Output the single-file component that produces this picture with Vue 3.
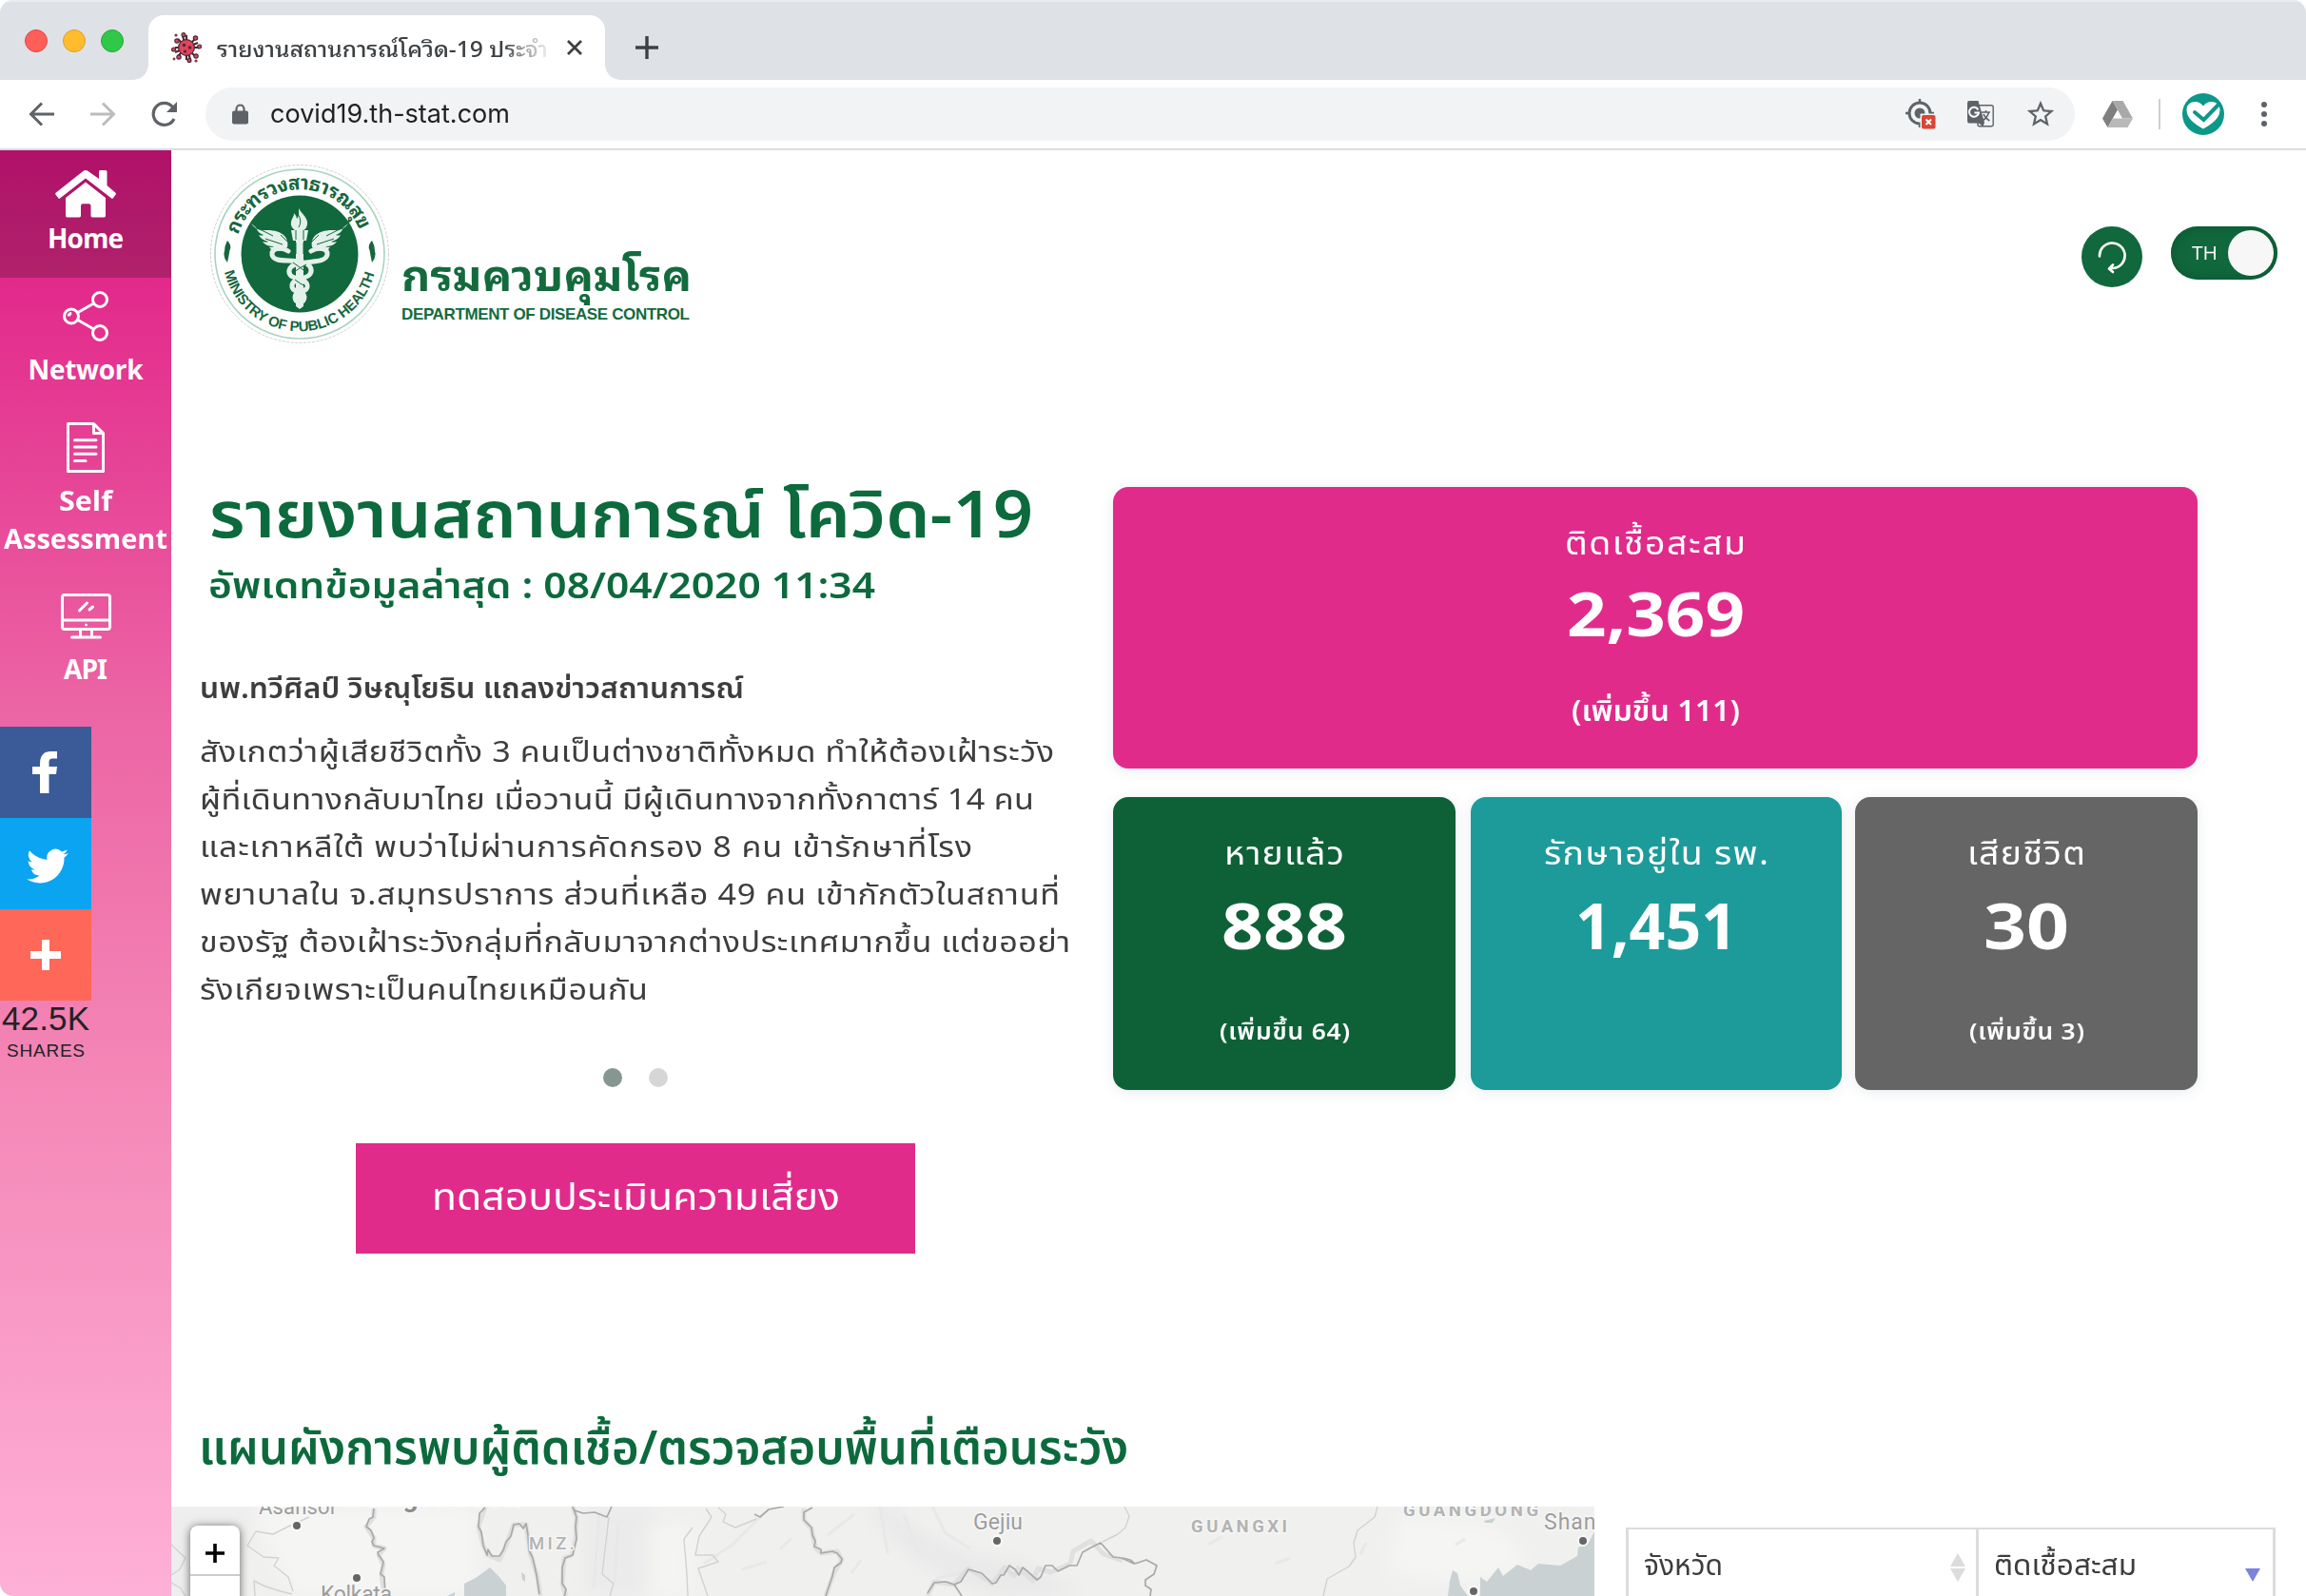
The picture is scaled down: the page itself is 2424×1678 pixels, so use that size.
<script setup>
// Makes a run of text take up the given width in pixels: the glyphs widen
// up to a limit (the directive's argument, in percent), letter spacing does the rest.
const vFit = {
  mounted(el, { value, arg }) {
    const limit = Number(arg || 110) / 100
    el.style.letterSpacing = '0px'
    const base = el.getBoundingClientRect().width
    el.style.letterSpacing = '1px'
    const count = Math.max(2, Math.round(el.getBoundingClientRect().width - base))
    const scale = Math.min(limit, Math.max(1, value / base))
    const gap = (value / scale - base) / (count - 1)
    el.style.letterSpacing = gap + 'px'
    el.style.transform = `scaleX(${scale})`
    el.style.marginRight = value - (base + gap * count) + 'px'
  },
}

const newsLines = [
  { text: 'สังเกตว่าผู้เสียชีวิตทั้ง 3 คนเป็นต่างชาติทั้งหมด ทำให้ต้องเฝ้าระวัง', w: 898 },
  { text: 'ผู้ที่เดินทางกลับมาไทย เมื่อวานนี้ มีผู้เดินทางจากทั้งกาตาร์ 14 คน', w: 877 },
  { text: 'และเกาหลีใต้ พบว่าไม่ผ่านการคัดกรอง 8 คน เข้ารักษาที่โรง', w: 812 },
  { text: 'พยาบาลใน จ.สมุทรปราการ ส่วนที่เหลือ 49 คน เข้ากักตัวในสถานที่', w: 904 },
  { text: 'ของรัฐ ต้องเฝ้าระวังกลุ่มที่กลับมาจากต่างประเทศมากขึ้น แต่ขออย่า', w: 915 },
  { text: 'รังเกียจเพราะเป็นคนไทยเหมือนกัน', w: 471 },
]

const cards = [
  { cls: 'recovered', label: 'หายแล้ว', lw: 126, value: '888', vw: 132, inc: '(เพิ่มขึ้น 64)', iw: 137 },
  { cls: 'hospital', label: 'รักษาอยู่ใน รพ.', lw: 236, value: '1,451', vw: 170, inc: '', iw: 0 },
  { cls: 'deaths', label: 'เสียชีวิต', lw: 124, value: '30', vw: 90, inc: '(เพิ่มขึ้น 3)', iw: 121 },
]
</script>

<template>
  <div class="window">
    <div class="tabbar">
      <div class="lights"><i class="red"></i><i class="yellow"></i><i class="green"></i></div>
      <div class="tab">
        <svg class="favicon" viewBox="-16 -16 32 32" width="32" height="32">
          <g stroke="#4a2a35" stroke-width="2.2">
            <path d="M0-13V13M-12 0H13M-9-9L9 9M9-9L-9 9M-4-12L4 12M-12 5L12-5" />
          </g>
          <g fill="#e2445c" stroke="#4a2a35" stroke-width="1.2">
            <circle cx="-3" cy="-13.4" r="2" /><circle cx="9.5" cy="-10" r="2.2" /><circle cx="13.6" cy="-1" r="2" />
            <circle cx="10" cy="9" r="2.2" /><circle cx="3" cy="13.6" r="2" /><circle cx="-8" cy="10" r="2.2" />
            <circle cx="-13.4" cy="2" r="2" /><circle cx="-10" cy="-7" r="2.2" />
            <circle r="8.4" />
          </g>
          <g fill="#4a2a35"><circle cx="-2.5" cy="-2.5" r="1.8" /><circle cx="3.5" cy="0" r="1.8" /><circle cx="-1.5" cy="4" r="1.6" /></g>
          <g fill="#8a3040"><circle cx="-11" cy="-13" r="1.6" /><circle cx="-13" cy="12" r="1.4" /><circle cx="10" cy="14" r="1.6" /></g>
        </svg>
        <span class="tab-title"><span v-fit="348">รายงานสถานการณ์โควิด-19 ประจำ</span></span>
        <svg class="tab-close" viewBox="0 0 18 18" width="18" height="18"><path d="M2 2l14 14M16 2L2 16" stroke="#3c4043" stroke-width="2.8" /></svg>
      </div>
      <svg class="new-tab" viewBox="0 0 24 24" width="24" height="24"><path d="M12 0v24M0 12h24" stroke="#3c4043" stroke-width="3.4" /></svg>
    </div>

    <div class="toolbar">
      <svg class="nav" viewBox="0 0 28 28" width="28" height="28"><path d="M27 14H3M14 2.500L2.500 14 14 25.500" fill="none" stroke="#5f6368" stroke-width="3" /></svg>
      <svg class="nav fwd" viewBox="0 0 28 28" width="28" height="28"><path d="M1 14h24M14 2.500L25.500 14 14 25.500" fill="none" stroke="#babcbe" stroke-width="3" /></svg>
      <svg class="nav reload" viewBox="0 0 28 28" width="28" height="28"><path d="M24 19A11.500 11.500 0 1 1 22.500 6.500" fill="none" stroke="#5f6368" stroke-width="3.200" /><path d="M27 1v11H16z" fill="#5f6368" /></svg>
      <div class="omnibox">
        <svg class="lock" viewBox="0 0 17 22" width="17" height="22"><rect y="7.500" width="17" height="14" rx="2" fill="#5f6368" /><path d="M4.500 9V5.500a4 4 0 0 1 8 0V9" fill="none" stroke="#5f6368" stroke-width="2.200" /></svg>
        <span class="url"><span v-fit="252">covid19.th-stat.com</span></span>
        <svg class="i-locate" viewBox="0 0 32 32" width="32" height="32">
          <circle cx="15" cy="15" r="11" fill="none" stroke="#5f6368" stroke-width="3" /><circle cx="15" cy="15" r="5.500" fill="#5f6368" />
          <path d="M15 0v4M0 15h4M26 15h4M15 26v4" stroke="#5f6368" stroke-width="2.400" />
          <rect x="15.500" y="15.500" width="17" height="17" fill="#f1f3f4" /><rect x="17" y="17" width="14.500" height="14.500" rx="2" fill="#db4437" />
          <path d="M21.500 21.500l5.500 5.500M27 21.500L21.500 27" stroke="#fff" stroke-width="2" />
        </svg>
        <svg class="i-translate" viewBox="0 0 28 28" width="28" height="28">
          <rect x="11" y="4.800" width="16.200" height="22" rx="2" fill="#f1f3f4" stroke="#5f6368" stroke-width="1.400" />
          <path d="M2 0h9.500l6.500 23 -1.500 4L12 23.500H2a2 2 0 0 1-2-2V2a2 2 0 0 1 2-2z" fill="#5f6368" />
          <path d="M11.500 9.500A5 5 0 1 0 12 12.500H7.500" fill="none" stroke="#fff" stroke-width="2" />
          <path d="M15 12h9M19.500 10v2M22.500 12c-.8 4-3.600 7-6.500 9M17 14c1.200 3 3.800 5.500 6.300 7" fill="none" stroke="#5f6368" stroke-width="1.500" />
        </svg>
        <svg class="i-star" viewBox="0 0 24 24" width="34" height="34"><path fill="#5f6368" d="M22 9.240l-7.190-.62L12 2 9.190 8.630 2 9.240l5.460 4.730L5.820 21 12 17.270 18.180 21l-1.630-7.030L22 9.240zM12 15.400l-3.760 2.270 1-4.280-3.320-2.880 4.380-.38L12 6.100l1.710 4.040 4.380.38-3.320 2.880 1 4.280L12 15.400z" /></svg>
      </div>
      <svg class="i-drive" viewBox="0 0 32 28" width="32" height="28"><path d="M10.500 0L16 9.500 5.500 28 0 18.500z" fill="#7f7f7f" /><path d="M10.500 0h11L32 18.500H21z" fill="#a9a9a9" /><path d="M11 18.500h21L26.500 28h-21z" fill="#b9b9b9" /></svg>
      <i class="sep"></i>
      <svg class="avatar" viewBox="-22 -22 44 44" width="44" height="44">
        <circle r="22" fill="#0d9788" />
        <path d="M0 15.500C-9 10-17.500 5-17.500-4.500c0-9 12-11.500 17.500-4 5.500-7.500 17.500-5 17.500 4C17.500 5 9 10 0 15.500z" fill="#fff" />
        <path d="M-9-2l9.500 8L16-10" fill="none" stroke="#0d9788" stroke-width="4" stroke-linecap="round" />
      </svg>
      <svg class="menu" viewBox="0 0 6 26" width="6" height="26" fill="#5f6368"><circle cx="3" cy="3" r="3" /><circle cx="3" cy="13" r="3" /><circle cx="3" cy="23" r="3" /></svg>
    </div>

    <div class="page">
      <aside class="sidebar">
        <div class="item active">
          <svg viewBox="0 0 64 44" width="64" height="50" preserveAspectRatio="none" fill="#fff"><path d="M46 8V1.500Q46 0 47.500 0h5.500Q54.500 0 54.500 1.500V14l9 7q.8.700.2 1.500l-3 3.400q-.7.700-1.500.1L32 7.500 5 26q-.8.600-1.500-.1L.4 22.500q-.6-.8.2-1.500L29 1.200q3-2.200 6 0z" /><path d="M32 11l21 14.500V42q0 1.500-1.500 1.500H39q-1.500 0-1.500-1.500V33q0-2-2-2h-6.500q-2 0-2 2v9q0 1.500-1.500 1.500H12.500Q11 43.500 11 42V25.500z" /></svg>
          <b><span v-fit="80">Home</span></b>
        </div>
        <div class="item network">
          <svg viewBox="0 0 48 53" width="48" height="53" fill="none" stroke="#fff" stroke-width="3"><circle cx="39" cy="9" r="7.500" /><circle cx="39" cy="44" r="7.500" /><circle cx="9" cy="26.500" r="7.500" /><path d="M15.500 22.800L32.500 13M15.500 30.200L32.500 40M6 26.500q.5-2.800 3.200-3" /></svg>
          <b><span v-fit="121">Network</span></b>
        </div>
        <div class="item assess">
          <svg viewBox="0 0 40 53" width="40" height="53" fill="none" stroke="#fff" stroke-width="3" stroke-linejoin="round"><path d="M1.500 1.500h27l10 10v40h-37zM28.500 1.500v10h10" /><path d="M8.500 18.700h22.500M8.500 26h22.500M8.500 33.200h22.500M8.500 40.400h11.500" stroke-linecap="round" /></svg>
          <b><span v-fit="56">Self</span><br><span v-fit="172">Assessment</span></b>
        </div>
        <div class="item api">
          <svg viewBox="0 0 53 48" width="53" height="48" fill="none" stroke="#fff" stroke-width="3"><rect x="1.500" y="1.500" width="50" height="36" rx="2.500" /><path d="M2 28h49M20.500 38v7M32.500 38v7" /><path d="M11.500 46h30M19.500 18l8-8M30 17l3.500-3" stroke-linecap="round" /><circle cx="26.500" cy="33" r="1" fill="#fff" stroke-width="1" /></svg>
          <b><span v-fit="46">API</span></b>
        </div>
        <div class="share">
          <a class="fb"><svg viewBox="0 0 28 44" width="28" height="44"><path fill="#fff" d="M8 44V24H0v-8h8v-3C8 3.500 13 0 19 0h7v7.500h-4c-3.500 0-4.500 1-4.500 4.500v4H26l-1 8h-7.500v20z" /></svg></a>
          <a class="tw"><svg viewBox="0 0 24 20" width="44" height="37"><path fill="#fff" d="M23.950 2.570a10 10 0 0 1-2.820.78 4.960 4.960 0 0 0 2.160-2.720c-.95.550-2 .95-3.130 1.180A4.920 4.920 0 0 0 11.780 6.300C7.690 6.110 4.070 4.130 1.640 1.160A4.920 4.920 0 0 0 3.160 7.720a4.900 4.900 0 0 1-2.230-.61v.06c0 2.380 1.700 4.370 3.950 4.830a5 5 0 0 1-2.210.08 4.940 4.940 0 0 0 4.600 3.420A9.870 9.870 0 0 1 0 17.540 13.940 13.940 0 0 0 7.550 19.750c9.050 0 14-7.500 14-13.980 0-.21 0-.42-.02-.63a9.940 9.940 0 0 0 2.420-2.570z" /></svg></a>
          <a class="more"><svg viewBox="0 0 32 32" width="32" height="32"><path d="M16 0v32M0 16h32" stroke="#fff" stroke-width="8" /></svg></a>
          <div class="count"><span v-fit:100="92">42.5K</span></div>
          <div class="shares"><span v-fit:100="82">SHARES</span></div>
        </div>
      </aside>

      <main>
        <header>
          <svg class="emblem" viewBox="-95 -95 190 190" width="190" height="190">
            <circle r="93.500" fill="#fff" stroke="#cfcfcf" stroke-width="1" stroke-dasharray="3 1.500" />
            <circle r="89" fill="none" stroke="#a9d3bf" stroke-width="1.600" />
            <circle r="61.500" fill="#11683c" />
            <path id="arc-top" d="M-65-19A67.700 67.700 0 0 1 65-19" fill="none" />
            <path id="arc-bottom" d="M-79.500 17A81.300 81.300 0 0 0 79.500 17" fill="none" />
            <g fill="#17663d" font-weight="700">
              <text class="ring-th" font-size="20.500"><textPath href="#arc-top" startOffset="1" textLength="167">กระทรวงสาธารณสุข</textPath></text>
              <text class="ring-en" font-size="15"><textPath href="#arc-bottom" startOffset="2" textLength="215" lengthAdjust="spacing">MINISTRY OF PUBLIC HEALTH</textPath></text>
              <path d="M-76-14q5 5 2.500 10q-1 6-2.500 13q-5-6-3-12q0-6 3-11zM76-14q-5 5-2.500 10q1 6 2.500 13q5-6 3-12q0-6-3-11z" />
            </g>
            <g fill="#e3f1ea">
              <path d="M-1-48C3-41 9-38 8-31q-1 5-4 6H-5q-5-3-4-9c1-4 3-5 3-9q3 3 3 6c3-3 2-7 2-11z" />
              <path d="M-9-25H9L7-14H4V55L0 58-4 55V-14H-7z" />
              <path id="wing" d="M-51-32C-45-24-40-25-34-25c8 0 14 2 18 6 3 3 4 8 3 12l-6 3c-6 2-11 0-13-3q4 0 5-1-9 0-12-5 4 1 6 0-8-2-10-7 3 1 5 0-7-3-8-8z" />
              <use href="#wing" transform="scale(-1 1)" />
            </g>
            <g fill="none" stroke="#e3f1ea" stroke-width="5" stroke-linecap="round">
              <path d="M-12-3C-20-8-30-6-29 1c2 8 16 5 28 7 12 1 15 8 12 13C8 27-9 25-8 34c0 7 13 5 13 11q0 5-5 6" />
              <path d="M12-3C20-8 30-6 29 1c-2 8-16 6-28 9-11 1-14 7-11 12 3 5 18 3 18 12 0 7-13 5-13 11q0 5 4 5" />
            </g>
            <g fill="none" stroke="#11683c" stroke-width="1"><path d="M-4-12V0M4-12V0M-44-27l16 8M44-27l-16 8M-36-16l18 6M36-16l-18 6M-20-20l7 7M20-20l-7 7M-2-42q5 7 1 14M-4-25V-15M4-25V-15M-7 9q7 5 14 10M7 11q-6 3-13 8M-5 27q5 4 11 7" /></g>
          </svg>
          <div class="dept">
            <div class="dept-th"><span v-fit="305">กรมควบคุมโรค</span></div>
            <div class="dept-en"><span v-fit="303">DEPARTMENT OF DISEASE CONTROL</span></div>
          </div>
          <div class="refresh"><svg viewBox="-16 -18 32 36" width="32" height="36" fill="none" stroke="#fff" stroke-width="2.600" stroke-linecap="round" stroke-linejoin="round"><path d="M-13-.5A13.300 13.300 0 1 1 1.500 12H-2.500M1 8.500L-3 12.500 1 16" /></svg></div>
          <div class="toggle"><span v-fit="27">TH</span><i></i></div>
        </header>

        <section class="hero">
          <div class="report">
            <h1><span v-fit:115="866">รายงานสถานการณ์ โควิด-19</span></h1>
            <h2><span v-fit:115="701">อัพเดทข้อมูลล่าสุด : 08/04/2020 11:34</span></h2>
            <h3><span v-fit="572">นพ.ทวีศิลป์ วิษณุโยธิน แถลงข่าวสถานการณ์</span></h3>
            <p><template v-for="l in newsLines" :key="l.text"><span v-fit="l.w">{{ l.text }}</span><br></template></p>
            <div class="dots"><i class="on"></i><i></i></div>
            <a class="cta"><span v-fit="429">ทดสอบประเมินความเสี่ยง</span></a>
          </div>
          <div class="stats">
            <div class="card total">
              <div class="label"><span v-fit="190">ติดเชื้อสะสม</span></div>
              <div class="num"><span v-fit:122="187">2,369</span></div>
              <div class="inc"><span v-fit="177">(เพิ่มขึ้น 111)</span></div>
            </div>
            <div class="row">
              <div v-for="c in cards" :key="c.cls" class="card" :class="c.cls">
                <div class="label"><span v-fit="c.lw">{{ c.label }}</span></div>
                <div class="num"><span v-fit:122="c.vw">{{ c.value }}</span></div>
                <div v-if="c.inc" class="inc"><span v-fit="c.iw">{{ c.inc }}</span></div>
              </div>
            </div>
          </div>
        </section>

        <h2 class="map-title"><span v-fit="977">แผนผังการพบผู้ติดเชื้อ/ตรวจสอบพื้นที่เตือนระวัง</span></h2>

        <section class="bottom">
          <div class="map">
            <svg viewBox="0 0 1496 94" width="1496" height="94">
              <defs><filter id="relief" x="-10%" y="-40%" width="120%" height="180%"><feGaussianBlur stdDeviation="9" /></filter></defs>
              <rect width="1496" height="94" fill="#f0f0ef" />
              <g filter="url(#relief)">
                <path d="M80 0H320V94H130z" fill="#f5f5f4" /><path d="M0 0H90L60 94H0z" fill="#ecedec" />
                <path d="M435 0h75v94h-75z" fill="#ebebeb" /><path d="M500 20h50v74h-50z" fill="#f4f4f3" />
                <path d="M760 0q40 50 140 60l60 34h-90q-90-20-140-94z" fill="#e9e9e9" /><path d="M1290 10l100 10 40 40-60 20-90-10z" fill="#f5f5f3" />
              </g>
              <g fill="none" stroke="#e8e8e8" stroke-width="3"><path d="M560 60l30-20 30-30M690 30l28-22M640 45l12-12M600 66l26-8M745 0l8 50M770 8l16 42M800 0l14 28 26 16M830 70l-26 5M715 70l10-14M450 6l-6 80M470 20l-4 60M1090 40l14-8M1160 60l16-6M1350 40l10-6M1250 50l6-12" /></g>
              <g fill="#c9d1d3">
                <path d="M308 94V81l12-6 15-11 9 9 8 10v11zM368 69l4 3v7l-3-2zM290 94l8-4v4z" />
                <path d="M1342 94l2-16 3-11 5 3 3 13 8 11zM1376 94V74l7 5 12-15 5 9 15-12 14 6 8-7 23 2 18-10 1-9 11-5 6-12V94zM1380 15l12-3-3 5h-8z" />
              </g>
              <g fill="none" stroke="#d2d2d2" stroke-width="1.400" stroke-linejoin="round">
                <path d="M145 11l-22 10-16 8-18-3-9 15 17 12 16 1-5 8 15 12 5 15M88 94l-1-16 12 6 16 5 12 3M0 40l15 14-6 12-9 6M0 80l10 6 5 8M460 11l-7 60 12 10-4 13" />
                <path d="M562 2l6 9-13 20-4 20h18l6 7-21 7 10 29M548 22l-9 12 3 37 1 23M575 1l8 7-3 8 13 6 22-9M1002 0l5 10-4 12-8 7-16 8M1268 0l-3 11-18 14-4 13 2 15-7 10-23 13-4 18" />
              </g>
              <g fill="none" stroke="#e0e0e0" stroke-width="5" stroke-linejoin="round"><path d="M213 2v9l-8 10 8 12v8l11 3-6 7 5 10-2 10 3 23M330 1l-7 20 5 20 5 10 12 5 7-15 8-22 13 0 4 29 8 26 3 20M422 0l4 11-1 23-4 17-8 3-2 27 4 13M665 2v12l8 9 4 20 6 6 17-2 5 9-8 13-9 25M795 94l7-15 21 3 15-17 25 16 13-17 10 9 4-8 16 13 5-13 14 4 20-9 3-13 19-11 13 14 20 7" /></g>
              <g fill="none" stroke="#a9a9a9" stroke-width="1.700" stroke-linejoin="round">
                <path d="M213 2l-1 9-4 2-3 8 5 4 3 8-2 4 2 4 11 3-7 4 1 3 5 7-1 5-2 8 4 3 1 20" />
                <path d="M330 1l-6 6-1 14 3 6 2 14 4 10 1-6 4 7 8 0 4-6 3-9 5-6 3-12 6-1 4 5 3-5 2 12 1 16 4 8 4 18 3 20M422 0l4 11-1 10 1 13-4 17-8 3-3 10 0 17 4 6-2 8M424 4l9 3 12-1 13 5 5-11" />
                <path d="M674 1l-9 5v8l8 8 1 8 3 6-1 6 7 3v4l12-2 5 2 5 6-1 4-7 5-2 9-7 21M613 8l6 3 9-8 16-3M795 91l7-11 12-1 9 3 7-3 8-13 14 4 11 11 4-1 5-8 3 0 6-10 6 4 4 6 4-8 5 4 10 9 4-3 5-12 7 0 6 6 12-6 8 0 6-14 9-5 10-5 13 15 9 1 13 6M823 82l8 12" />
                <path d="M1000 54l8 2 5 4 12-4 11 6-3 9-9 6 0 6 6 4-1 7" />
              </g>
              <g class="city" fill="#9d9d9d">
                <text x="92" y="8" font-size="22" textLength="80">Asansol</text><text x="183" y="0" font-size="28" font-weight="700" fill="#8e8e8e" textLength="184">Bangladesh</text>
                <text x="157" y="100" font-size="23" textLength="75">Kolkata</text><text x="843" y="24" font-size="23" textLength="52">Gejiu</text><text x="1443" y="24" font-size="23" letter-spacing="1">Shantou</text>
              </g>
              <g class="city" fill="#b3b3b3" font-weight="700" font-size="18.500">
                <text x="376" y="45" font-weight="500" textLength="48">MIZ.</text><text x="1072" y="27" textLength="101">GUANGXI</text><text x="1295" y="10" textLength="142">GUANGDONG</text>
              </g>
              <g fill="#666" stroke="#fafafa" stroke-width="2"><circle cx="132" cy="20" r="5" /><circle cx="195" cy="75" r="5" /><circle cx="868" cy="36" r="5" /><circle cx="1369" cy="89" r="5" /><circle cx="1484" cy="36" r="5" /></g>
            </svg>
            <div class="zoom"><span>
              <svg viewBox="0 0 20 20" width="20" height="20"><path d="M10 0v20M0 10h20" stroke="#000" stroke-width="3.600" /></svg>
            </span></div>
          </div>
          <div class="table">
            <div class="th province"><span v-fit="83">จังหวัด</span>
              <svg viewBox="0 0 16 30" width="16" height="30" fill="#dcdcdc"><path d="M8 0l8 14H0zM8 30l8-14H0z" /></svg>
            </div>
            <div class="th infected"><span v-fit="150">ติดเชื้อสะสม</span>
              <svg viewBox="0 0 16 30" width="16" height="30" fill="#7a84dd"><path d="M8 30l8-14H0z" /></svg>
            </div>
          </div>
        </section>
      </main>
    </div>
  </div>
</template>

<style>
body { background: #fff; }
</style>

<style scoped>
.window { width: 2424px; height: 1678px; overflow: hidden; background: #fff; border-radius: 14px; font-family: 'Noto Sans Thai', 'Noto Sans', 'Open Sans', sans-serif; color: #3d3d3d; }
.window *, .window { box-sizing: border-box; }
svg { display: block; flex: none; }
span { display: inline-block; white-space: nowrap; transform-origin: 0 50%; }
h1, h2, h3, p { margin: 0; }

.tabbar { height: 84px; background: #dee1e6; display: flex; align-items: flex-start; box-shadow: inset 0 2px #eaecef; }
.lights { display: flex; gap: 16px; padding: 31px 0 0 26px; width: 156px; }
.lights i { width: 24px; height: 24px; border-radius: 50%; border: 1px solid; }
.lights .red { background: #ff5f58; border-color: #e2463f; }
.lights .yellow { background: #ffbd2e; border-color: #dfa023; }
.lights .green { background: #31c84a; border-color: #1faa33; }
.tab { position: relative; margin-top: 16px; width: 480px; height: 68px; background: #fff; border-radius: 16px 16px 0 0; display: flex; align-items: center; padding-left: 24px; }
.tab::before, .tab::after { content: ''; position: absolute; bottom: 0; width: 16px; height: 16px; }
.tab::before { left: -16px; background: radial-gradient(circle at 0 0, transparent 15.5px, #fff 16px); }
.tab::after { right: -16px; background: radial-gradient(circle at 100% 0, transparent 15.5px, #fff 16px); }
.tab-title { margin-left: 16px; width: 352px; height: 50px; line-height: 50px; overflow: hidden; font-family: 'Noto Sans Thai Looped', 'Noto Sans Thai', sans-serif; font-size: 23px; font-weight: 500; color: #3c4043; -webkit-mask-image: linear-gradient(90deg, #000 85%, transparent 100%); mask-image: linear-gradient(90deg, #000 85%, transparent 100%); }
.tab-close { margin-left: 15px; }
.new-tab { margin: 38px 0 0 32px; }

.toolbar { height: 74px; border-bottom: 2px solid #dadce3; display: flex; align-items: center; padding-left: 30px; }
.nav.fwd { margin-left: 36px; }
.nav.reload { margin-left: 37px; }
.omnibox { margin-left: 29px; width: 1965px; height: 56px; border-radius: 28px; background: #f1f3f4; display: flex; align-items: center; padding-left: 28px; }
.url { font-family: Inter, Roboto, sans-serif; font-size: 27px; line-height: 58px; color: #202124; margin: 0 auto 0 23px; }
.i-locate { margin-right: 33px; }
.i-translate { margin-right: 32px; }
.i-star { margin-right: 19px; }
.i-drive { margin-left: 29px; }
.sep { width: 2px; height: 32px; background: #cdcfd2; margin-left: 27px; }
.avatar { margin-left: 23px; }
.menu { margin-left: 39px; }

.page { display: flex; height: 1520px; }
.sidebar { width: 180px; background: linear-gradient(#e01f86 0, #e2298b 134px, #ec64a4 582px, #f486b6 972px, #feb0d7 100%); color: #fff; }
.item { display: flex; flex-direction: column; align-items: center; }
.item b { font-size: 28px; line-height: 40px; text-align: center; font-weight: 700; }
.active { height: 134px; padding-top: 21px; background: linear-gradient(#b01168, #b0226c); }
.active b { margin-top: 4px; }
.network { padding-top: 14px; }
.network b { margin-top: 12px; }
.assess { padding-top: 33px; }
.assess b { margin-top: 12px; }
.api { padding-top: 35px; }
.api b { margin-top: 14px; }
.share { margin-top: 38px; width: 96px; color: #222; font-family: 'Liberation Sans', Arial, sans-serif; }
.share a { height: 96px; display: flex; align-items: center; justify-content: center; }
.fb { background: #3a5b97; }
.tw { background: #0ba4f1; padding: 5px 0 0 4px; }
.more { background: #ff6758; }
.count { font-size: 35px; line-height: 38px; height: 40px; text-align: center; }
.shares { font-size: 19px; line-height: 26px; text-align: center; }

main { width: 2244px; }
header { height: 342px; display: flex; align-items: flex-start; }
.emblem { margin: 14px 0 0 40px; }
.ring-th { font-family: 'Noto Sans Thai Looped', 'Noto Sans Thai', sans-serif; }
.ring-en { font-family: 'Liberation Sans', Arial, sans-serif; }
.dept { margin: 92px auto 0 12px; color: #136b3d; font-weight: 700; }
.dept-th { font-family: 'Noto Sans Thai Looped', 'Noto Sans Thai', sans-serif; font-weight: 700; font-size: 46px; line-height: 70px; height: 70px; }
.dept-en { font-family: 'Liberation Sans', Arial, sans-serif; font-size: 17px; line-height: 22px; }
.refresh { margin-top: 80px; width: 64px; height: 64px; border-radius: 50%; background: #10683c; display: flex; align-items: center; justify-content: center; }
.toggle { margin: 80px 30px 0; width: 112px; height: 56px; border-radius: 28px; background: #10683c; box-shadow: inset 0 0 12px #0b5230; display: flex; align-items: center; padding: 0 4px 0 22px; justify-content: space-between; color: #fff; font: 20px/62px 'Open Sans', sans-serif; }
.toggle i { width: 48px; height: 48px; border-radius: 50%; background: #f7f7f7; }

.hero { display: flex; align-items: flex-start; height: 989px; }
.report { width: 990px; padding: 5px 0 0 30px; }
h1 { color: #0c6a3d; font-size: 68px; line-height: 80px; font-weight: 600; padding-left: 10px; }
.report h2 { color: #0c6a3d; font-size: 38px; line-height: 50px; margin-top: 8px; font-weight: 600; padding-left: 9px; }
h3 { font-size: 30px; line-height: 50px; font-weight: 600; margin-top: 57px; }
p { font-size: 31px; line-height: 50px; margin-top: 17px; height: 300px; font-weight: 400; }
p span { vertical-align: top; }
.dots { display: flex; gap: 28px; margin: 56px 0 0 424px; }
.dots i { width: 20px; height: 20px; border-radius: 50%; background: #d6d6d6; }
.dots .on { background: #869791; }
.cta { display: block; margin: 59px 0 0 164px; width: 588px; height: 116px; background: #e12b8b; color: #fff; font-size: 40px; line-height: 116px; text-align: center; }

.stats { width: 1140px; padding-top: 12px; }
.card { border-radius: 16px; color: #fff; text-align: center; padding-top: 37px; box-shadow: 0 2px 14px rgba(60, 90, 120, .12); }
.total { height: 296px; background: #e12b8b; padding-top: 36px; }
.row { display: flex; margin-top: 30px; }
.row .card { width: 360px; height: 308px; padding-top: 36px; }
.recovered { background: #0e6137; }
.row .hospital { width: 390px; margin: 0 14px 0 16px; background: #1c9b9a; }
.deaths { background: #656565; }
.label { font-size: 34px; line-height: 50px; height: 50px; }
.num { font-size: 64px; line-height: 80px; height: 80px; font-weight: 700; margin-top: 12px; }
.inc { font-size: 30px; line-height: 40px; height: 40px; font-weight: 600; margin-top: 39px; }
.row .num { font-size: 66px; margin-top: 14px; }
.row .inc { font-size: 24px; margin-top: 48px; }

.map-title { color: #0c6a3d; font-size: 49px; line-height: 70px; height: 95px; padding-left: 29px; font-weight: 600; }
.bottom { display: flex; align-items: flex-start; height: 94px; overflow: hidden; }
.map { position: relative; width: 1496px; height: 94px; overflow: hidden; }
.city { font-family: Roboto, 'Open Sans', sans-serif; paint-order: stroke; stroke: #f6f6f6; stroke-width: 3px; }
.zoom { position: absolute; left: 20px; top: 20px; width: 52px; height: 106px; background: #fff; border-radius: 8px; box-shadow: 0 1px 10px rgba(0, 0, 0, .6); }
.zoom span { display: flex; align-items: center; justify-content: center; height: 53px; padding-top: 6px; border-bottom: 2px solid #ccc; }
.table { margin: 22px 0 0 33px; width: 683px; height: 90px; display: flex; border: 3px solid #dcdcdc; border-top-width: 2px; }
.th { display: flex; align-items: flex-start; justify-content: space-between; font-size: 30px; line-height: 60px; padding: 9px 0 0 16px; }
.th svg { margin-top: 16px; }
.province { width: 368px; border-right: 3px solid #dcdcdc; padding-right: 11px; }
.infected { flex: 1; padding-right: 13px; }
</style>
